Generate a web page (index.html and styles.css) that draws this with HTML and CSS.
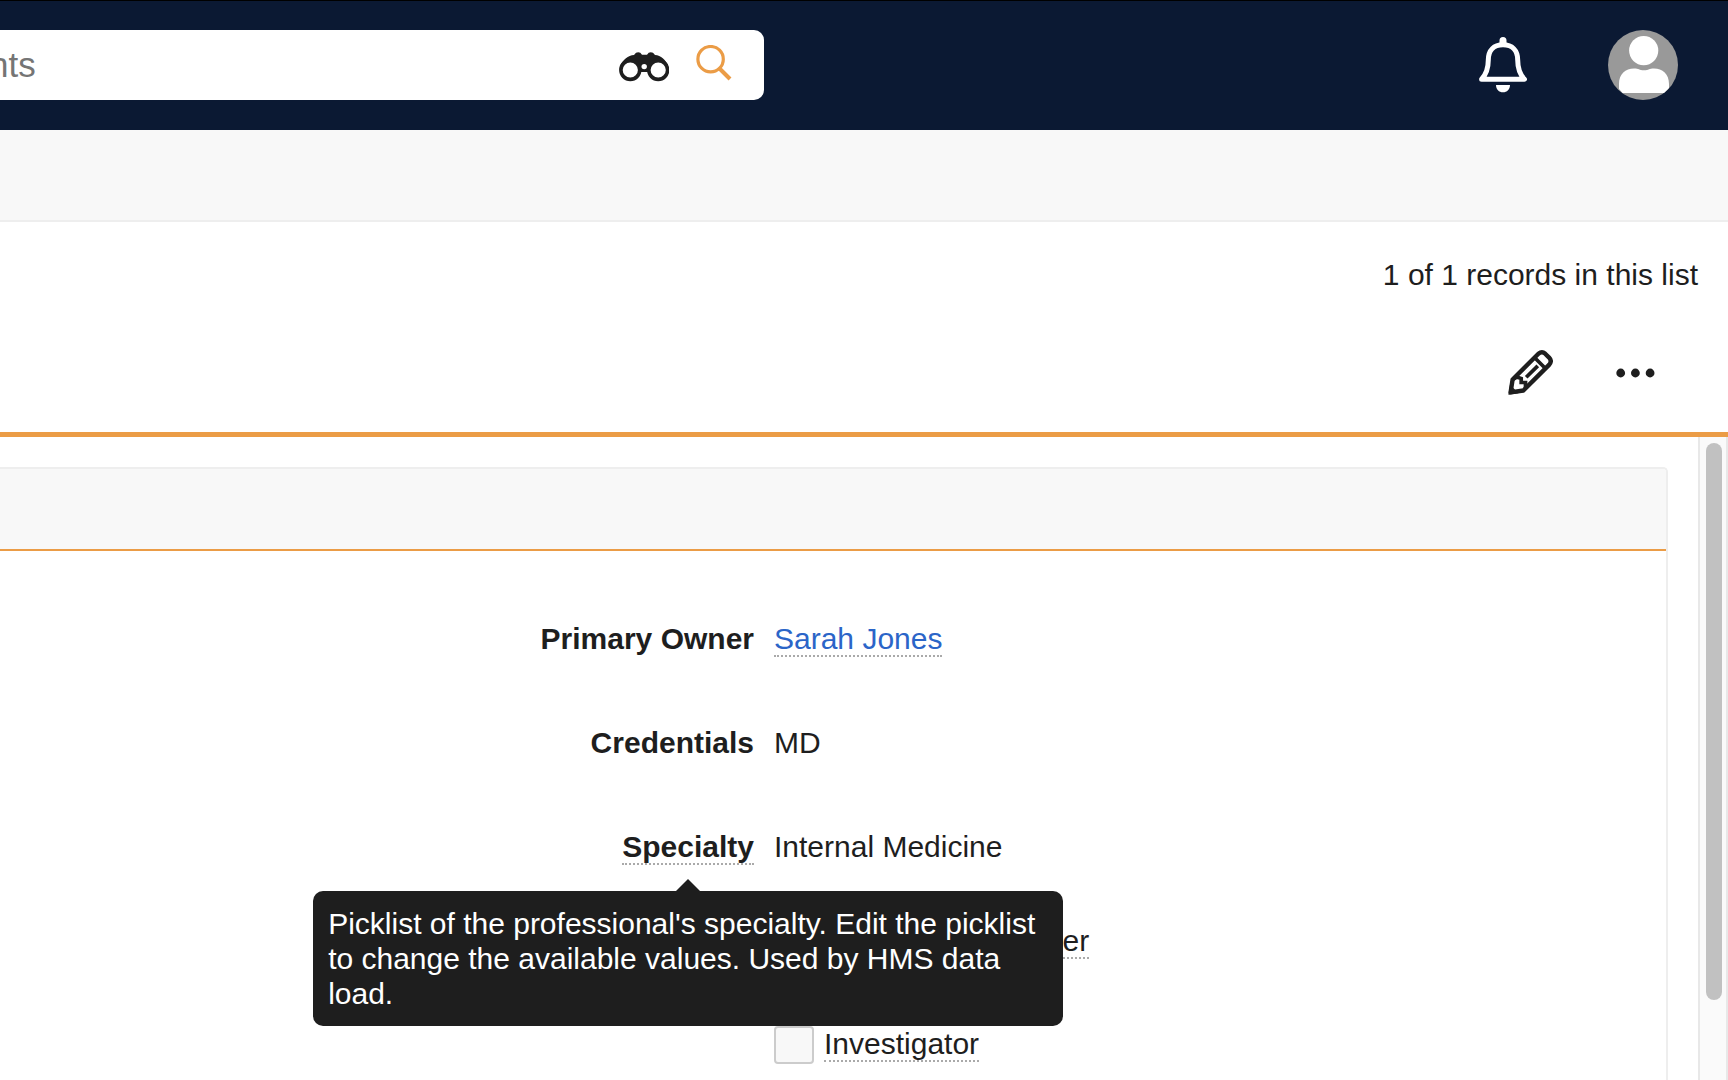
FILE: index.html
```html
<!DOCTYPE html>
<html lang="en">
<head>
    <meta charset="UTF-8">
    <meta name="viewport" content="width=device-width, initial-scale=1.0">
    <title>Account Record</title>
    <link rel="stylesheet" href="styles.css">
</head>
<body>
    <header class="topbar">
        <form class="search" role="search">
            <input class="search-input" type="text" placeholder="nts" aria-label="Search">
            <button class="icon-button search-advanced" type="button" aria-label="Advanced search">
                <svg width="50" height="30" viewBox="0 0 50 30">
                    <path fill="#1e1e1e" d="M1.500 13C4 8 9 3.500 15 3L17 .8Q19.200-.4 21.300 .8L23 2.700H28L29.700 .8Q31.800-.4 34 .8L36 3C42 3.500 46.500 8 49 13L39 20H11Z"/>
                    <circle cx="11.300" cy="18" r="9.400" fill="#fff" stroke="#1e1e1e" stroke-width="3.600"/>
                    <circle cx="39.200" cy="18" r="9.400" fill="#fff" stroke="#1e1e1e" stroke-width="3.600"/>
                    <circle cx="25.200" cy="14.600" r="2.700" fill="#fff"/>
                </svg>
            </button>
            <button class="icon-button search-submit" type="submit" aria-label="Search">
                <svg width="36" height="36" viewBox="0 0 36 36" fill="none" stroke="#eb9c46">
                    <circle cx="14.600" cy="14.200" r="12.700" stroke-width="3.200"/>
                    <path d="M23.500 23.500L34 34" stroke-width="4"/>
                </svg>
            </button>
        </form>
        <div class="user-tools">
            <button class="icon-button" type="button" aria-label="Notifications">
                <svg width="48" height="56" viewBox="0 0 48 56">
                    <path fill="none" stroke="#fff" stroke-width="5" stroke-linejoin="round" d="M2.600 42.200C7.500 37 9.300 32 9.300 23C9.300 13 15 7.800 24 7.800C33 7.800 38.700 13 38.700 23C38.700 32 40.500 37 45.400 42.200Z"/>
                    <path fill="#fff" d="M20.500 8V3.500A3.500 3.500 0 0 1 27.500 3.500V8ZM17 48H31C31 52.500 28 55.300 24 55.300C20 55.300 17 52.500 17 48Z"/>
                </svg>
            </button>
            <button class="icon-button" type="button" aria-label="User menu">
                <svg width="70" height="70" viewBox="0 0 70 70">
                    <circle cx="35" cy="35" r="35" fill="#999"/>
                    <circle cx="35.700" cy="20.600" r="14.600" fill="#fff"/>
                    <path fill="#fff" d="M11 59V54C11 44 17.500 38.500 26 38.500C31 38.500 31 40.200 36 40.200C41 40.200 41 38.500 46 38.500C54.500 38.500 61 44 61 54V58L56 63H14.500Z"/>
                </svg>
            </button>
        </div>
    </header>

    <div class="tab-strip"></div>

    <section class="record-header">
        <p class="record-count">1 of 1 records in this list</p>
        <div class="record-actions">
            <button class="icon-button" type="button" aria-label="Edit">
                <svg width="45" height="45" viewBox="0 0 45 45" fill="none" stroke="#1e1e1e">
                    <path stroke-width="4.400" stroke-linejoin="round" d="M2.600 42.400L4.600 29.500L30.400 3.700Q34 .9 37.200 3.700L41.100 7.600Q44.300 11 41.300 14.600L15.400 40.500Z"/>
                    <path stroke-width="3.700" d="M26 7L37 18M18.200 27.300L29.800 15.900M5 29.500L9 27L13.200 28.500V32.500H17.500L17.500 39"/>
                    <path fill="#1e1e1e" stroke="none" d="M.4 44.800L2 34.500L10.500 43.300Z"/>
                </svg>
            </button>
            <button class="icon-button" type="button" aria-label="More actions">
                <svg width="40" height="10" viewBox="0 0 40 10" fill="#1e1e1e">
                    <circle cx="4.700" cy="5" r="4.400"/>
                    <circle cx="19.400" cy="5" r="4.400"/>
                    <circle cx="34.100" cy="5" r="4.400"/>
                </svg>
            </button>
        </div>
    </section>

    <main class="content">
        <section class="panel">
            <div class="panel-header"></div>
            <dl class="fields">
                <dt>Primary Owner</dt>
                <dd><a class="dotted" href="#">Sarah Jones</a></dd>
                <dt>Credentials</dt>
                <dd>MD</dd>
                <dt>
                    <span class="has-tooltip">
                        <span class="dotted" aria-describedby="specialty-help">Specialty</span>
                        <span class="tooltip" id="specialty-help" role="tooltip">Picklist of the professional's specialty. Edit the picklist to change the available values. Used by HMS data load.</span>
                    </span>
                </dt>
                <dd>Internal Medicine</dd>
            </dl>
            <div class="checks">
                <div class="check">
                    <input type="checkbox" id="leader">
                    <label for="leader"><span class="dotted">Key Opinion Leader</span></label>
                </div>
                <div class="check">
                    <input type="checkbox" id="investigator">
                    <label for="investigator"><span class="dotted">Investigator</span></label>
                </div>
            </div>
        </section>
        <div class="scroll-track">
            <div class="scroll-thumb"></div>
        </div>
    </main>
</body>
</html>
```

FILE: styles.css
```css
* {
    box-sizing: border-box;
}
body {
    margin: 0;
    height: 100vh;
    display: flex;
    flex-direction: column;
    overflow: hidden;
    background: #fff;
    color: #1e1e1e;
    font-family: "Liberation Sans", Arial, sans-serif;
    font-size: 30px;
    line-height: 35px;
}
.icon-button {
    display: flex;
    padding: 0;
    border: none;
    background: none;
    cursor: pointer;
}

/* top bar */
.topbar {
    flex: none;
    display: flex;
    justify-content: space-between;
    padding: 29px 50px 30px 0;
    border-top: 1px solid #000;
    background: #0b1933;
}
.search {
    flex: 0 1 764px;
    display: flex;
    align-items: center;
    gap: 27px;
    height: 70px;
    padding-right: 32px;
    border-radius: 0 10px 10px 0;
    background: #fff;
}
/* the start of the field runs off the left edge */
.search-input {
    flex: 1;
    min-width: 0;
    margin-left: -11px;
    padding: 0;
    border: none;
    outline: none;
    background: none;
    font: 35px "Liberation Sans", Arial, sans-serif;
}
.search-input::placeholder {
    color: #757575;
}
.search-advanced {
    padding-top: 4px;
}
.search-submit {
    padding-bottom: 4px;
}
.user-tools {
    display: flex;
    align-items: center;
    gap: 81px;
}

.tab-strip {
    flex: none;
    height: 92px;
    border-bottom: 2px solid #eee;
    background: #f8f8f8;
}

/* record header */
.record-header {
    flex: none;
    padding: 35px 0 37px;
    border-bottom: 5px solid #eb9c46;
}
.record-count {
    margin: 0 30px 58px 0;
    text-align: right;
}
.record-actions {
    display: flex;
    align-items: center;
    justify-content: flex-end;
    gap: 63px;
    margin-right: 72px;
}

/* record body */
.content {
    flex: 1;
    display: flex;
    min-height: 0;
}
.panel {
    flex: 1;
    margin: 30px 30px 0 0;
    border: solid #eee;
    border-width: 2px 2px 0 0;
    border-radius: 0 5px 0 0;
}
.panel-header {
    height: 82px;
    border-bottom: 2px solid #eb9c46;
    border-radius: 0 3px 0 0;
    background: #f8f8f8;
}
.fields {
    display: grid;
    grid-template-columns: 754px 1fr;
    gap: 69px 20px;
    margin: 0;
    padding-top: 70px;
}
.fields dt {
    font-weight: bold;
    text-align: right;
}
.fields dd {
    margin: 0;
}
.dotted {
    border-bottom: 2px dotted #aaa;
}
a.dotted {
    color: #2b65c8;
    text-decoration: none;
}
.checks {
    display: flex;
    flex-direction: column;
    gap: 65px;
    margin: 59px 0 0 774px;
}
.check {
    display: flex;
    gap: 10px;
}
.check input {
    appearance: none;
    width: 40px;
    height: 38px;
    margin: 0;
    border: 2px solid #ccc;
    border-radius: 4px;
    background: #f8f8f8;
}

/* help tooltip */
.has-tooltip {
    display: inline-block;
    position: relative;
}
.tooltip {
    position: absolute;
    top: calc(100% + 27px);
    left: 50%;
    z-index: 1;
    width: 750px;
    padding: 15px;
    border-radius: 10px;
    background: #1e1e1e;
    color: #fff;
    font-weight: normal;
    text-align: left;
    transform: translateX(-50%);
}
.tooltip::before {
    content: "";
    position: absolute;
    bottom: 100%;
    left: 50%;
    margin-left: -12px;
    border: 12px solid transparent;
    border-top: none;
    border-bottom-color: #1e1e1e;
}

/* scrollbar */
.scroll-track {
    flex: none;
    display: flex;
    flex-direction: column;
    width: 30px;
    padding: 6px 4px 0 6px;
    border: solid #e8e8e8;
    border-width: 0 2px;
    background: #fafafa;
}
.scroll-thumb {
    flex: 7;
    border-radius: 8px;
    background: #c1c1c1;
}
.scroll-track::after {
    content: "";
    flex: 1;
}
```
